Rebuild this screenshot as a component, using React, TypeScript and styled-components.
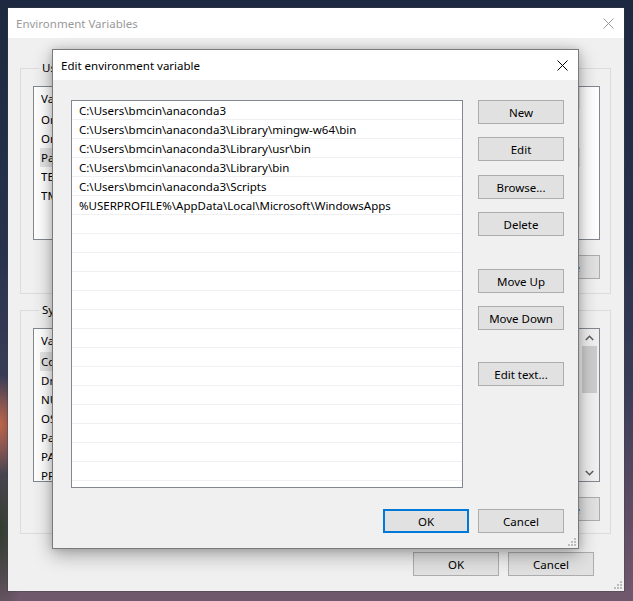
import React from "react";
import styled, { createGlobalStyle } from "styled-components";

const GlobalStyle = createGlobalStyle`
  html, body {
    margin: 0;
    padding: 0;
  }
  body {
    width: 633px;
    height: 601px;
    overflow: hidden;
    font-family: "Noto Sans", "Open Sans", sans-serif;
    font-size: 11.5px;
    color: #000;
    background:
      radial-gradient(ellipse 26px 50px at 0 425px, rgba(196, 104, 72, 0.95), rgba(196, 104, 72, 0) 100%),
      radial-gradient(ellipse 30px 90px at 0 530px, rgba(48, 60, 44, 0.95), rgba(48, 60, 44, 0) 100%),
      linear-gradient(to bottom, #1c2940 0%, #27314c 40%, #3a3d58 65%, #5e4c64 85%, #71596d 100%);
  }
`;

const Desktop = styled.div`
  position: relative;
  width: 633px;
  height: 601px;
  box-sizing: border-box;
  padding: 8px 9px 10px 8px;
`;

const Window = styled.div`
  width: 616px;
  height: 583px;
  background: #f0f0f0;
  display: flex;
  flex-direction: column;
  box-shadow: 0 0 0 1px rgba(60, 60, 70, 0.35);
`;

const TitleBar = styled.div<{ $active?: boolean; $h: number }>`
  height: ${(p) => p.$h}px;
  flex: none;
  background: #fff;
  display: flex;
  align-items: center;
  justify-content: space-between;
  padding-left: 8px;
  color: ${(p) => (p.$active ? "#000" : "#999999")};
  font-size: 11.5px;
`;

const CloseBox = styled.div`
  width: 32px;
  height: 100%;
  display: flex;
  align-items: center;
  justify-content: center;
`;

const OuterBody = styled.div`
  flex: 1;
  display: flex;
  flex-direction: column;
  padding: 22px 0 0 12px;
`;

const Group = styled.fieldset<{ $mt: number; $pb: number }>`
  margin: ${(p) => p.$mt}px 0 0 0;
  width: 591px;
  box-sizing: border-box;
  border: 1px solid #dcdcdc;
  padding: 0 10px ${(p) => p.$pb}px 12px;
  min-width: 0;
`;

const Legend = styled.legend`
  margin-left: 6px;
  padding: 0 3px;
  line-height: 16px;
  font-size: 11.5px;
`;

const ListView = styled.div`
  margin-top: 10px;
  height: 154px;
  border: 1px solid #828790;
  background: #fff;
  display: flex;
  overflow: hidden;
  box-sizing: border-box;
`;

const ListColumn = styled.div`
  flex: 1;
  display: flex;
  flex-direction: column;
  align-items: flex-start;
  padding-left: 6px;
  min-width: 0;
`;

const ListHeader = styled.div`
  height: 23px;
  flex: none;
  display: flex;
  align-items: stretch;
  padding-left: 1px;
`;

const HeaderCell = styled.span<{ $w: number }>`
  width: ${(p) => p.$w}px;
  flex: none;
  display: flex;
  align-items: center;
  border-right: 1px solid #e5e5e5;
  box-sizing: border-box;
  overflow: hidden;
  white-space: nowrap;
`;

const ListItem = styled.div<{ $selected?: boolean }>`
  height: 19px;
  flex: none;
  display: flex;
  align-items: center;
  padding-left: 1px;
  background: ${(p) => (p.$selected ? "#e5e5e5" : "transparent")};
  white-space: nowrap;
`;

const Cell = styled.span<{ $w: number }>`
  width: ${(p) => p.$w}px;
  flex: none;
  overflow: hidden;
  text-overflow: ellipsis;
  white-space: nowrap;
`;

const ScrollBar = styled.div`
  width: 20px;
  flex: none;
  background: #f0f0f0;
  display: flex;
  flex-direction: column;
  align-items: center;
`;

const ScrollArrow = styled.div`
  height: 17px;
  width: 100%;
  display: flex;
  align-items: center;
  justify-content: center;
  flex: none;
`;

const ScrollTrack = styled.div`
  flex: 1;
  width: 100%;
  display: flex;
  justify-content: center;
`;

const ScrollThumb = styled.div`
  width: 15px;
  height: 47px;
  background: #cdcdcd;
`;

const ButtonRow = styled.div<{ $mt: number; $gap: number }>`
  display: flex;
  justify-content: flex-end;
  gap: ${(p) => p.$gap}px;
  margin-top: ${(p) => p.$mt}px;
`;

const Button = styled.button<{ $w?: number; $mt?: number; $default?: boolean }>`
  width: ${(p) => p.$w ?? 86}px;
  height: 24px;
  margin: ${(p) => p.$mt ?? 0}px 0 0 0;
  padding: 0;
  box-sizing: border-box;
  background: #e1e1e1;
  border: ${(p) => (p.$default ? "2px solid #0078d7" : "1px solid #adadad")};
  font-family: "Noto Sans", "Open Sans", sans-serif;
  font-size: 11.5px;
  color: #000;
  display: flex;
  align-items: center;
  justify-content: center;
  flex: none;
`;

const OuterFooter = styled.div`
  display: flex;
  justify-content: flex-end;
  gap: 9px;
  margin-top: 18px;
  padding-right: 30px;
`;

const Dialog = styled.div`
  position: absolute;
  left: 52px;
  top: 49px;
  width: 527px;
  height: 500px;
  box-sizing: border-box;
  border: 1px solid #7a7a7a;
  background: #f0f0f0;
  display: flex;
  flex-direction: column;
  box-shadow: 0 6px 18px rgba(0, 0, 0, 0.32), 0 0 8px rgba(0, 0, 0, 0.15);
`;

const DialogBody = styled.div`
  flex: 1;
  display: flex;
  flex-direction: column;
  padding: 20px 14px 15px 18px;
`;

const DialogMain = styled.div`
  display: flex;
  gap: 15px;
`;

const PathList = styled.div`
  width: 392px;
  height: 388px;
  box-sizing: border-box;
  border: 1px solid #828790;
  background: #fff;
  overflow: hidden;
  display: flex;
  flex-direction: column;
`;

const PathRow = styled.div`
  height: 19px;
  flex: none;
  box-sizing: border-box;
  border-bottom: 1px solid #f0f0f0;
  display: flex;
  align-items: center;
  padding-left: 7px;
  white-space: nowrap;
`;

const SideButtons = styled.div`
  display: flex;
  flex-direction: column;
`;

const Grip = styled.svg`
  position: absolute;
  right: 2px;
  bottom: 2px;
`;

const CloseIcon = ({ color }: { color: string }) => (
  <svg width="11" height="11" viewBox="0 0 11 11">
    <path d="M0.5 0.5 L10.5 10.5 M10.5 0.5 L0.5 10.5" stroke={color} strokeWidth="1" fill="none" />
  </svg>
);

const Chevron = ({ up }: { up?: boolean }) => (
  <svg width="9" height="6" viewBox="0 0 9 6">
    <path
      d={up ? "M0.8 5 L4.5 1.3 L8.2 5" : "M0.8 1 L4.5 4.7 L8.2 1"}
      stroke="#606060"
      strokeWidth="1.6"
      fill="none"
    />
  </svg>
);

const GripIcon = () => (
  <Grip width="8" height="8" viewBox="0 0 8 8">
    <rect x="6" y="0" width="2" height="2" fill="#bdbdbd" />
    <rect x="3" y="3" width="2" height="2" fill="#bdbdbd" />
    <rect x="6" y="3" width="2" height="2" fill="#bdbdbd" />
    <rect x="0" y="6" width="2" height="2" fill="#bdbdbd" />
    <rect x="3" y="6" width="2" height="2" fill="#bdbdbd" />
    <rect x="6" y="6" width="2" height="2" fill="#bdbdbd" />
  </Grip>
);

const WindowFrame = styled.div`
  position: relative;
`;

const userVars: [string, string][] = [
  ["OneDrive", "C:\\Users\\bmcin\\OneDrive"],
  ["OneDriveConsumer", "C:\\Users\\bmcin\\OneDrive"],
  ["Path", "C:\\Users\\bmcin\\anaconda3;C:\\Users\\bmcin\\anaconda3\\Library\\mingw-w64\\bin;..."],
  ["TEMP", "C:\\Users\\bmcin\\AppData\\Local\\Temp"],
  ["TMP", "C:\\Users\\bmcin\\AppData\\Local\\Temp"],
];

const sysVars: [string, string][] = [
  ["ComSpec", "C:\\WINDOWS\\system32\\cmd.exe"],
  ["DriverData", "C:\\Windows\\System32\\Drivers\\DriverData"],
  ["NUMBER_OF_PROCESSORS", "8"],
  ["OS", "Windows_NT"],
  ["Path", "C:\\WINDOWS\\system32;C:\\WINDOWS;C:\\WINDOWS\\System32\\Wbem;..."],
  ["PATHEXT", ".COM;.EXE;.BAT;.CMD;.VBS;.VBE;.JS;.JSE;.WSF;.WSH;.MSC"],
  ["PROCESSOR_ARCHITECTURE", "AMD64"],
];

const paths = [
  "C:\\Users\\bmcin\\anaconda3",
  "C:\\Users\\bmcin\\anaconda3\\Library\\mingw-w64\\bin",
  "C:\\Users\\bmcin\\anaconda3\\Library\\usr\\bin",
  "C:\\Users\\bmcin\\anaconda3\\Library\\bin",
  "C:\\Users\\bmcin\\anaconda3\\Scripts",
  "%USERPROFILE%\\AppData\\Local\\Microsoft\\WindowsApps",
];

const sideButtons: [string, number][] = [
  ["New", 0],
  ["Edit", 13],
  ["Browse...", 14],
  ["Delete", 13],
  ["Move Up", 33],
  ["Move Down", 13],
  ["Edit text...", 32],
];

const VAR_W = 150;
const VAL_W = 389;

const VarList = ({ items, selected }: { items: [string, string][]; selected: string }) => (
  <ListColumn>
    <ListHeader>
      <HeaderCell $w={VAR_W}>Variable</HeaderCell>
      <HeaderCell $w={VAL_W}>Value</HeaderCell>
    </ListHeader>
    {items.map(([k, v]) => (
      <ListItem key={k} $selected={k === selected}>
        <Cell $w={VAR_W}>{k}</Cell>
        <Cell $w={VAL_W - 40}>{v}</Cell>
        <Cell $w={40} />
      </ListItem>
    ))}
  </ListColumn>
);

export default function App() {
  const rows = Array.from({ length: 22 }, (_, i) => paths[i] ?? "");
  return (
    <>
      <GlobalStyle />
      <Desktop>
        <WindowFrame>
          <Window>
            <TitleBar $h={30}>
              <span>Environment Variables</span>
              <CloseBox>
                <CloseIcon color="#9a9a9a" />
              </CloseBox>
            </TitleBar>
            <OuterBody>
              <Group $mt={0} $pb={14}>
                <Legend>User variables for bmcin</Legend>
                <ListView>
                  <VarList items={userVars} selected="Path" />
                </ListView>
                <ButtonRow $mt={15} $gap={9}>
                  <Button $w={75}>New...</Button>
                  <Button $w={75}>Edit...</Button>
                  <Button $w={75}>Delete</Button>
                </ButtonRow>
              </Group>
              <Group $mt={8} $pb={12}>
                <Legend>System variables</Legend>
                <ListView>
                  <VarList items={sysVars} selected="ComSpec" />
                  <ScrollBar>
                    <ScrollArrow>
                      <Chevron up />
                    </ScrollArrow>
                    <ScrollTrack>
                      <ScrollThumb />
                    </ScrollTrack>
                    <ScrollArrow>
                      <Chevron />
                    </ScrollArrow>
                  </ScrollBar>
                </ListView>
                <ButtonRow $mt={15} $gap={9}>
                  <Button $w={75}>New...</Button>
                  <Button $w={75}>Edit...</Button>
                  <Button $w={75}>Delete</Button>
                </ButtonRow>
              </Group>
              <OuterFooter>
                <Button>OK</Button>
                <Button>Cancel</Button>
              </OuterFooter>
            </OuterBody>
          </Window>
          <GripIcon />
        </WindowFrame>

        <Dialog>
          <TitleBar $active $h={30}>
            <span>Edit environment variable</span>
            <CloseBox>
              <CloseIcon color="#000" />
            </CloseBox>
          </TitleBar>
          <DialogBody>
            <DialogMain>
              <PathList>
                {rows.map((p, i) => (
                  <PathRow key={i}>{p}</PathRow>
                ))}
              </PathList>
              <SideButtons>
                {sideButtons.map(([label, mt]) => (
                  <Button key={label} $mt={mt}>
                    {label}
                  </Button>
                ))}
              </SideButtons>
            </DialogMain>
            <ButtonRow $mt={21} $gap={9}>
              <Button $default>OK</Button>
              <Button>Cancel</Button>
            </ButtonRow>
          </DialogBody>
          <GripIcon />
        </Dialog>
      </Desktop>
    </>
  );
}
